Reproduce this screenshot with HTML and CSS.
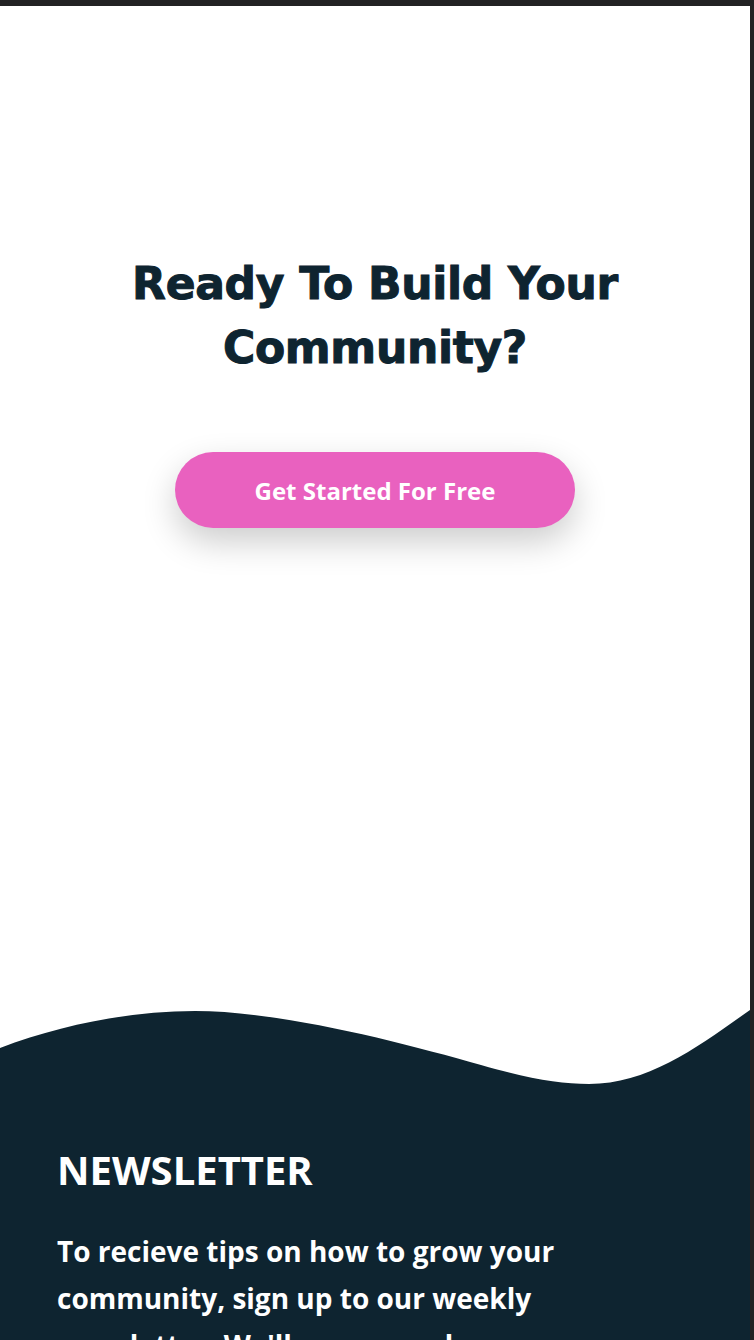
FILE: index.html
```html
<!DOCTYPE html>
<html lang="en">
<head>
<meta charset="utf-8">
<title>Ready To Build Your Community?</title>
<link rel="stylesheet" href="styles.css">
</head>
<body>
<div class="page">
  <section class="cta">
    <h1 class="cta-title">Ready To Build Your Community?</h1>
    <a class="cta-button" href="#">Get Started For Free</a>
  </section>
  <footer class="footer">
    <svg class="wave" viewBox="0 0 750 100" preserveAspectRatio="none" aria-hidden="true">
      <path d="M0,48 C60,25 130,11 195,11 C280,11 400,42 481,65 C530,79 560,84 589,84 C650,84 700,45 750,10 L750,100 L0,100 Z" fill="#0e2430"/>
    </svg>
    <div class="newsletter">
      <h2 class="newsletter-title">NEWSLETTER</h2>
      <p class="newsletter-text">To recieve tips on how to grow your community, sign up to our weekly newsletter. We'll never send you spam or pass on your email address.</p>
    </div>
  </footer>
</div>
</body>
</html>
```

FILE: styles.css
```css
html, body {
  margin: 0;
  padding: 0;
}
body {
  background: #222223;
  padding-top: 6px;
  overflow: hidden;
}
.page {
  width: 750px;
  background: #ffffff;
}
.cta {
  display: flex;
  flex-direction: column;
  align-items: center;
  padding-top: 246px;
  height: 750px;
  box-sizing: border-box;
}
.cta-title {
  margin: 0;
  width: 560px;
  text-align: center;
  font-family: "DejaVu Sans", sans-serif;
  font-weight: 700;
  font-size: 44px;
  line-height: 64px;
  color: #0e2430;
  letter-spacing: -0.3px;
  -webkit-text-stroke: 1px #0e2430;
}
.cta-button {
  margin-top: 72px;
  width: 400px;
  height: 76px;
  border-radius: 38px;
  background: #e961bf;
  color: #ffffff;
  font-family: "Open Sans", sans-serif;
  font-weight: 700;
  font-size: 24px;
  text-decoration: none;
  display: flex;
  align-items: center;
  justify-content: center;
  box-shadow: 0 14px 34px rgba(0, 0, 0, 0.2);
}
.footer {
  padding-top: 244px;
}
.wave {
  display: block;
  width: 750px;
  height: 100px;
}
.newsletter {
  background: #0e2430;
  color: #ffffff;
  font-family: "Open Sans", sans-serif;
  padding: 44px 57px 40px;
}
.newsletter-title {
  margin: 0;
  font-size: 40px;
  font-weight: 700;
  line-height: 52px;
}
.newsletter-text {
  margin: 32px 0 0;
  font-size: 28px;
  font-weight: 700;
  line-height: 47px;
}
```
